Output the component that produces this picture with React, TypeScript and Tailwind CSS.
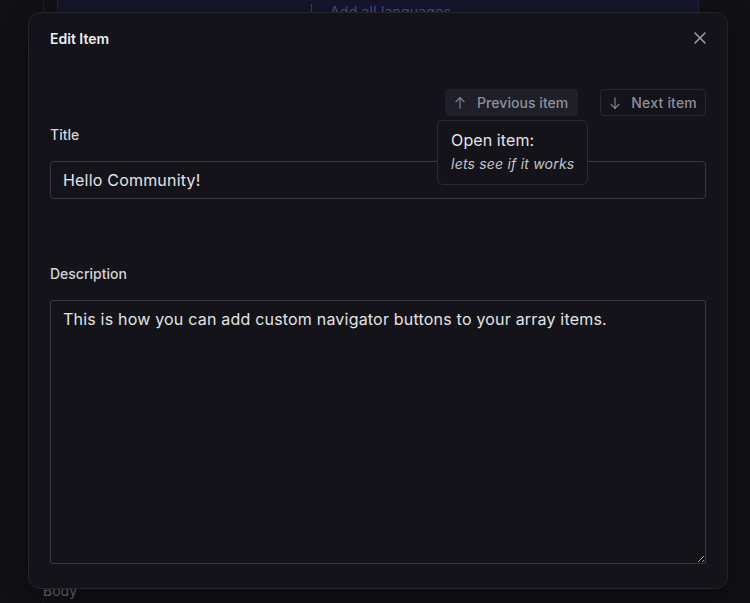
import React from "react";

const ArrowUp = () => (
  <svg width="16" height="16" viewBox="0 0 24 24" fill="none" stroke="currentColor" strokeWidth="1.6" strokeLinecap="round" strokeLinejoin="round">
    <path d="M12 20V4" />
    <path d="M6 10l6-6 6 6" />
  </svg>
);

const ArrowDown = () => (
  <svg width="16" height="16" viewBox="0 0 24 24" fill="none" stroke="currentColor" strokeWidth="1.6" strokeLinecap="round" strokeLinejoin="round">
    <path d="M12 4v16" />
    <path d="M6 14l6 6 6-6" />
  </svg>
);

const CloseIcon = () => (
  <svg width="14" height="14" viewBox="0 0 14 14" fill="none" stroke="currentColor" strokeWidth="1.5" strokeLinecap="round">
    <path d="M2 2l10 10M12 2L2 12" />
  </svg>
);

export default function App() {
  return (
    <div
      className="relative h-[603px] w-[750px] overflow-hidden bg-[#111115] text-[#e4e4e7]"
      style={{ fontFamily: "Inter, 'Noto Sans', sans-serif" }}
    >
      {/* background page */}
      <div className="absolute inset-0 flex">
        <div className="ml-[43px] flex h-full w-[686px] flex-col border-l border-[#1c1d24]">
          <div className="ml-[13px] flex h-[40px] w-[642px] items-start border-x border-[#22243d] bg-[#15162b]">
            <div className="ml-[253px] mt-[1px] flex items-center">
              <div className="h-[16px] w-px bg-[#3b3e63]" />
              <span className="ml-[18px] text-[14px] tracking-[0.2px] text-[#4b4f86]">Add all languages</span>
            </div>
          </div>
          <div className="flex-1" />
          <div className="mb-[2px] ml-[-1px] text-[14px] text-[#6b6b75]">Body</div>
        </div>
      </div>

      {/* modal */}
      <div className="absolute left-[28px] top-[12px] flex h-[577px] w-[700px] flex-col rounded-[12px] border border-[#24252e] bg-[#131319] px-[21px] shadow-[0_8px_24px_rgba(0,0,0,0.4)]">
        <div className="flex h-[50px] items-center justify-between">
          <span className="text-[14px] font-semibold text-[#ededf0]">Edit Item</span>
          <button className="mr-[-1px] text-[#a1a1aa]">
            <CloseIcon />
          </button>
        </div>

        <div className="mt-[26px] flex justify-end gap-[22px]">
          <div className="relative">
            <button className="flex h-[27px] items-center gap-[9px] rounded-[4px] bg-[#1e1f28] pl-[7px] pr-[10px] text-[14px] font-medium tracking-[0.05px] text-[#8e909c]">
              <ArrowUp />
              <span>Previous item</span>
            </button>
            <div className="absolute left-[-8px] top-[31px] z-10 w-max whitespace-nowrap rounded-[6px] border border-[#2a2b35] bg-[#131319] px-[13px] pb-[10px] pt-[9px]">
              <div className="text-[16px] leading-[20px] tracking-[0.1px] text-[#e4e4e7]">Open item:</div>
              <div className="mt-[4px] text-[14px] italic leading-[20px] tracking-[0.2px] text-[#c4c4cc]">lets see if it works</div>
            </div>
          </div>
          <button className="flex h-[27px] items-center gap-[8px] rounded-[4px] border border-[#262731] pl-[6px] pr-[8px] text-[14px] font-medium tracking-[0.2px] text-[#8e909c]">
            <ArrowDown />
            <span>Next item</span>
          </button>
        </div>

        <div className="mt-[8px] text-[14px] font-medium text-[#d4d4d8]">Title</div>
        <div className="mt-[16px] flex h-[38px] items-center rounded-[4px] border border-[#353845] px-[12px] pb-[1px] text-[16px] tracking-[0.2px] text-[#e4e4e7]">
          Hello Community!
        </div>

        <div className="mt-[64px] text-[14px] font-medium text-[#d4d4d8]">Description</div>
        <textarea
          className="mt-[16px] h-[264px] w-full resize-y rounded-[2px] border border-[#353845] bg-transparent px-[12px] pb-[9px] pt-[6px] text-[16px] tracking-[0.2px] text-[#e4e4e7] outline-none"
          defaultValue="This is how you can add custom navigator buttons to your array items."
        />
      </div>
    </div>
  );
}
